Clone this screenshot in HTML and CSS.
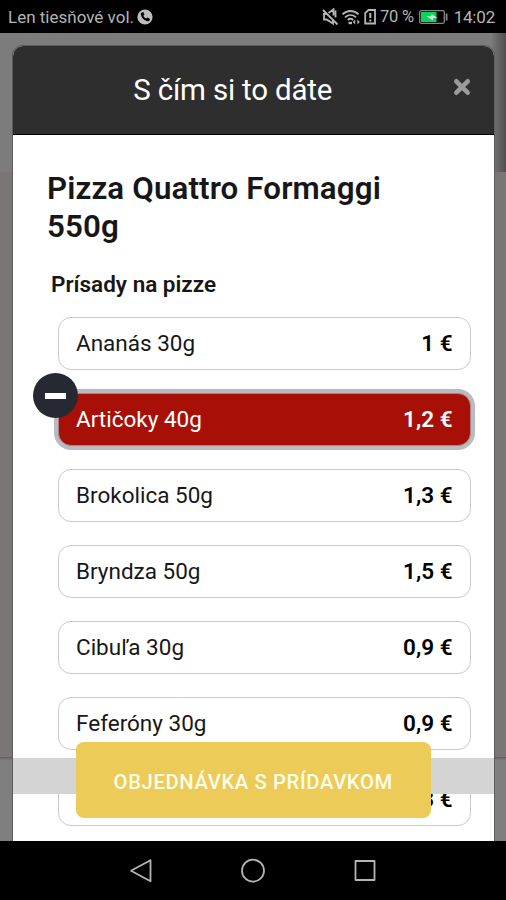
FILE: index.html
```html
<!DOCTYPE html>
<html lang="sk">
<head>
<meta charset="utf-8">
<title>S čím si to dáte</title>
<link rel="stylesheet" href="styles.css">
</head>
<body>
<div class="phone">
  <header class="status">
    <span class="carrier">Len tiesňové vol.</span>
    <svg class="call" width="16" height="16" viewBox="0 0 16 16"><circle cx="8" cy="8" r="7.6" fill="#bdbdbd"/><path d="M4.800 3.400 6.300 3l1.200 2.700-1.100 1c.6 1.300 1.500 2.200 2.800 2.900l1.100-1.100 2.600 1.200-.3 1.600c-.2.8-.9 1.100-1.700 1C7.600 11.900 4.300 8.700 3.800 5.200c-.1-.9.3-1.600 1-1.800z" fill="#000"/></svg>
    <svg class="icons" width="56" height="18" viewBox="0 0 56 18" fill="none" stroke="#b5b5b5" stroke-width="1.800">
      <path d="M1 2 15.500 16.500M5 6H2v5.500h2.700l6.300 4v-3M6.500 5 11.500 1.300v6.200M13.500 2.500v7"/>
      <path d="M20.500 6.300c4.700-4.400 11.300-4.400 16 0M23 9.300c3.300-3 7.700-3 11 0M25.800 12c1.700-1.500 3.700-1.500 5.400 0"/>
      <path d="M26.500 15h3.500" stroke-width="2.400"/><path d="m30.800 14 2.400-2.500v5zM37.800 14l-2.400-2.500v5z" fill="#b5b5b5" stroke="none"/>
      <path d="M46.500 2H53v13.500H43.200V5.200z"/><path d="M48.300 5v5M48.300 11.500v2" stroke-width="2"/>
    </svg>
    <span class="percent">70 %</span>
    <svg class="battery" width="29" height="14" viewBox="0 0 29 14"><rect x=".7" y=".7" width="24.600" height="12.600" rx="1.500" fill="none" stroke="#888" stroke-width="1.300"/><path d="M2 2h15.500v10H2z" fill="#0bd35d"/><path d="M7.500 6.200h5V4l6 4h-4.500v2.500z" fill="#d9f5e2"/><path d="M27.600 3.500v7" stroke="#888" stroke-width="1.800"/></svg>
    <span class="clock">14:02</span>
  </header>
  <main class="page">
    <div class="side-shadow"></div>
    <section class="modal">
      <div class="modal-head">
        <h1>S čím si to dáte</h1>
        <svg class="close" width="18" height="18" viewBox="0 0 18 18"><path d="m3.300 3.300 11.400 11.400M14.700 3.300 3.300 14.700" stroke="#9b9b9b" stroke-width="4.600" stroke-linecap="round"/></svg>
      </div>
      <div class="modal-body">
        <h2>Pizza Quattro Formaggi<br>550g</h2>
        <h3>Prísady na pizze</h3>
        <ul class="list">
          <li><span>Ananás 30g</span><b>1 €</b></li>
          <li class="selected"><span>Artičoky 40g</span><b>1,2 €</b><i class="minus"></i></li>
          <li><span>Brokolica 50g</span><b>1,3 €</b></li>
          <li><span>Bryndza 50g</span><b>1,5 €</b></li>
          <li><span>Cibuľa 30g</span><b>0,9 €</b></li>
          <li><span>Feferóny 30g</span><b>0,9 €</b></li>
          <li><span></span><b>1,3 €</b></li>
        </ul>
      </div>
      <div class="band"></div>
      <button class="order">OBJEDNÁVKA S PRÍDAVKOM</button>
    </section>
  </main>
  <nav class="nav">
    <svg width="24" height="26" viewBox="0 0 24 26"><path d="M21.500 2.300v21L2 12.800z"/></svg>
    <svg width="24" height="26" viewBox="0 0 24 26"><circle cx="12" cy="12.700" r="11"/></svg>
    <svg width="24" height="26" viewBox="0 0 24 26"><path d="M2.500 3h19v19h-19z"/></svg>
  </nav>
</div>
</body>
</html>
```
FILE: styles.css
```css
* { box-sizing: border-box; }
body { margin: 0; background: #000; font-family: Roboto, "Liberation Sans", sans-serif; }
h1, h2, h3, ul { margin: 0; padding: 0; }
.phone { width: 506px; height: 900px; display: flex; flex-direction: column; overflow: hidden; }
.status { height: 33px; flex: none; display: flex; align-items: center; padding: 1px 11px 0 8px; color: #b5b5b5; font-size: 17px; white-space: nowrap; }
.carrier { width: 129px; }
.call { flex: none; }
.icons { flex: none; margin-left: 169px; }
.percent { width: 39px; margin-left: 2px; padding-bottom: 1px; font-size: 16.500px; letter-spacing: -.2px; }
.battery { flex: none; }
.clock { margin-left: auto; letter-spacing: -.2px; }
.page { flex: none; height: 808px; position: relative; padding: 13px 12px 0 12.500px; overflow: hidden; background: linear-gradient(#7c7c7c 0 139px, #7a7675 139px 724px, #5f5d5d 724px, #7f7f7f 727px); }
.side-shadow { position: absolute; top: 0; right: 0; width: 14px; height: 139px; background: linear-gradient(90deg, #777, #505050); }
.modal { position: relative; height: 795px; overflow: hidden; background: #fff; border-radius: 10px 10px 0 0; box-shadow: 0 0 0 1px #5d5b5b; }
.modal-head { position: relative; height: 89px; background: #2e2e2e; border-bottom: 1px solid #000; color: #fff; display: flex; align-items: center; justify-content: center; padding: 0 44px 0 2px; }
.modal-head h1 { font-size: 29.500px; letter-spacing: -.18px; font-weight: 400; padding-left: 1px; white-space: nowrap; }
.close { position: absolute; right: 23px; top: 32px; }
.modal-body { padding: 35px 23px 0 34.500px; }
h2 { font-size: 31.300px; letter-spacing: .12px; line-height: 38px; font-weight: 600; color: #171717; white-space: nowrap; }
h3 { font-size: 22.500px; line-height: 28px; font-weight: 600; color: #171717; padding-left: 4px; margin-top: 24px; white-space: nowrap; }
.list { list-style: none; display: flex; flex-direction: column; gap: 23px; margin: 19px 0 0 10.500px; }
.list li { position: relative; height: 53px; display: flex; align-items: center; justify-content: space-between; padding: 0 17.500px 1px 17.500px; border: 1px solid #cacaca; border-radius: 13px; font-size: 22.500px; color: #171717; white-space: nowrap; }
.list b { font-weight: 600; color: #000; }
.list .selected { background: #a81007; border-color: #a98485; box-shadow: 0 0 0 4px #b9bbc0; color: #fff; }
.list .selected b { color: #fff; }
.minus { position: absolute; left: -26px; top: -21px; width: 45px; height: 45px; border-radius: 50%; background: #272932; display: flex; align-items: center; justify-content: center; }
.minus::before { content: ""; width: 21px; height: 6px; background: #fff; margin-top: 1px; }
.band { position: absolute; left: 0; right: 0; top: 712px; height: 36px; background: #d4d4d4; }
.order { position: absolute; left: 63px; top: 696px; width: 355.500px; height: 76px; border: 0; border-radius: 8px; background: #eccb58; color: #fffdeb; font: 500 20.300px Roboto, sans-serif; letter-spacing: .6px; padding: 3px 0 0; white-space: nowrap; }
.nav { height: 59px; flex: none; display: flex; justify-content: center; align-items: center; gap: 88px; background: #000; }
.nav svg { fill: none; stroke: #b5b5b5; stroke-width: 1.800; stroke-linejoin: round; }
```
